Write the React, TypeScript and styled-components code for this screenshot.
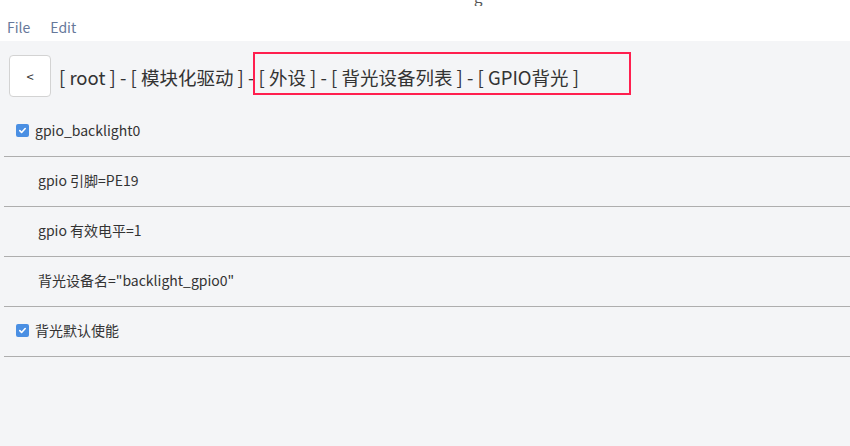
import React from "react";
import styled, { createGlobalStyle } from "styled-components";

const GlobalStyle = createGlobalStyle`
  html, body {
    margin: 0;
    padding: 0;
    background: #f4f5f7;
    font-family: "Noto Sans CJK SC", "Noto Sans", sans-serif;
  }
`;

const Page = styled.div`
  display: flex;
  flex-direction: column;
  width: 850px;
  height: 446px;
  overflow: hidden;
  background: #f4f5f7;
`;

const TitleStrip = styled.div`
  height: 6px;
  background: #fff;
  overflow: hidden;
  position: relative;
`;

const TitleText = styled.div`
  position: absolute;
  left: 474px;
  bottom: 2px;
  font-size: 15px;
  line-height: 15px;
  color: #555;
`;

const MenuBar = styled.div`
  display: flex;
  align-items: center;
  gap: 20px;
  height: 35px;
  padding: 7px 0 0 7px;
  box-sizing: border-box;
  background: #fff;
`;

const MenuItem = styled.span`
  font-size: 14px;
  color: #66789a;
`;

const Main = styled.div`
  flex: 1;
  display: flex;
  flex-direction: column;
  padding-top: 14px;
`;

const Header = styled.div`
  position: relative;
  display: flex;
  align-items: center;
  gap: 8px;
  padding-left: 9px;
`;

const BackButton = styled.button`
  width: 42px;
  height: 42px;
  border: 1px solid #d3d3d3;
  border-radius: 4px;
  background: #fff;
  color: #333;
  font-family: inherit;
  font-size: 13px;
  padding: 0;
`;

const Crumbs = styled.div`
  font-size: 18.5px;
  color: #333;
  white-space: nowrap;
  padding-top: 2px;
`;

const Highlight = styled.div`
  position: absolute;
  left: 253px;
  top: -3px;
  width: 374px;
  height: 39px;
  border: 2px solid #ff1f4f;
`;

const List = styled.div`
  display: flex;
  flex-direction: column;
  margin: 10px 0 0 4px;
`;

const Row = styled.div<{ $indent?: boolean }>`
  display: flex;
  align-items: center;
  gap: 6px;
  height: 49px;
  box-sizing: border-box;
  padding-left: ${(p) => (p.$indent ? "34px" : "12px")};
  padding-bottom: 3px;
  border-bottom: 1px solid #aeaeae;
  font-size: 14px;
  color: #333;
  box-sizing: content-box;
  height: 46px;
`;

const Check = styled.span`
  display: inline-flex;
  align-items: center;
  justify-content: center;
  width: 13px;
  height: 13px;
  border-radius: 2px;
  background: #4a8fe3;
`;

const CheckMark = () => (
  <Check>
    <svg width="9" height="9" viewBox="0 0 10 10">
      <path d="M2 5.2l2 2 4-4.4" fill="none" stroke="#fff" strokeWidth="1.8" strokeLinecap="round" strokeLinejoin="round" />
    </svg>
  </Check>
);

const rows: { label: string; check?: boolean }[] = [
  { label: "gpio_backlight0", check: true },
  { label: "gpio 引脚=PE19" },
  { label: "gpio 有效电平=1" },
  { label: '背光设备名="backlight_gpio0"' },
  { label: "背光默认使能", check: true },
];

export default function App() {
  return (
    <Page>
      <GlobalStyle />
      <TitleStrip>
        <TitleText>g</TitleText>
      </TitleStrip>
      <MenuBar>
        <MenuItem>File</MenuItem>
        <MenuItem>Edit</MenuItem>
      </MenuBar>
      <Main>
        <Header>
          <BackButton>&lt;</BackButton>
          <Crumbs>[ root ] - [ 模块化驱动 ] - [ 外设 ] - [ 背光设备列表 ] - [ GPIO背光 ]</Crumbs>
          <Highlight />
        </Header>
        <List>
          {rows.map((r) => (
            <Row key={r.label} $indent={!r.check}>
              {r.check && <CheckMark />}
              <span>{r.label}</span>
            </Row>
          ))}
        </List>
      </Main>
    </Page>
  );
}
